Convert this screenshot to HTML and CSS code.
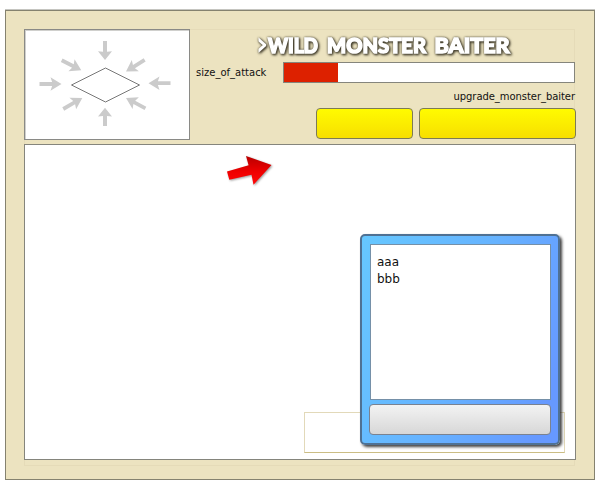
FILE: index.html
```html
<!DOCTYPE html>
<html lang="en">
<head>
<meta charset="utf-8">
<title>Wild Monster Baiter</title>
<link rel="stylesheet" href="styles.css">
</head>
<body>
<main class="frame">
  <div class="stage">
    <header class="top">
      <div class="compass">
        <svg width="163" height="108" viewBox="25 30 163 108">
          <defs><path id="arrow" d="M0 0 L-11 -6.700 L-9.400 -1.900 H-22 V1.900 H-9.400 L-11 6.700 Z"/></defs>
          <g fill="#cbcbcb">
            <use href="#arrow" transform="translate(61.500 84)"/>
            <use href="#arrow" transform="translate(148.500 83.200) rotate(180)"/>
            <path d="M105 60 L98 51.200 L103 51.800 V41 H107 V51.800 L112 51.200 Z"/>
            <path d="M105 107.700 L98 116.500 L103 116 V126 H107 V116 L112 116.500 Z"/>
            <use href="#arrow" transform="translate(81.300 70.200) rotate(27)"/>
            <use href="#arrow" transform="translate(126 71.500) rotate(148)"/>
            <use href="#arrow" transform="translate(82.300 98) rotate(-30)"/>
            <use href="#arrow" transform="translate(126 98) rotate(208)"/>
          </g>
          <path d="M71.500 85 L105.500 68 L139.500 85 L105.500 102 Z" fill="#fff" stroke="#777" stroke-width="1"/>
        </svg>
      </div>
      <div class="controls">
        <svg class="title" width="270" height="30" viewBox="250 31 270 30">
          <text><tspan x="256.500" y="56" class="mark" textLength="11" lengthAdjust="spacingAndGlyphs">&gt;</tspan><tspan x="268" y="53" textLength="50" lengthAdjust="spacingAndGlyphs">WILD</tspan><tspan x="327" textLength="99" lengthAdjust="spacingAndGlyphs">MONSTER</tspan><tspan x="434.500" textLength="75" lengthAdjust="spacingAndGlyphs">BAITER</tspan></text>
        </svg>
        <div class="attack">
          <span class="label size">size_of_attack</span>
          <div class="meter"><div class="fill"></div></div>
        </div>
        <div class="label upgrade">upgrade_monster_baiter</div>
        <div class="buttons">
          <button class="yellow small"></button>
          <button class="yellow large"></button>
        </div>
      </div>
    </header>
    <section class="field">
      <svg class="pointer" width="60" height="45" viewBox="220 150 60 45">
        <defs><linearGradient id="red" x1="0" y1="0" x2="0" y2="1"><stop offset="0" stop-color="#b80000"/><stop offset=".55" stop-color="#ef0000"/><stop offset="1" stop-color="#ff0909"/></linearGradient></defs>
        <path d="M271.500 165 L246 156 L248.600 165.300 L227 171.500 L229.300 179.700 L251.500 174.800 L253.500 184.700 Z" fill="url(#red)"/>
      </svg>
      <div class="hint"></div>
      <div class="dialog">
        <div class="message">aaa<br>bbb</div>
        <button class="confirm"></button>
      </div>
    </section>
  </div>
</main>
</body>
</html>
```

FILE: styles.css
```css
* { box-sizing: border-box; }
body {
  margin: 0;
  height: 480px;
  padding: 10px 0 0 5px;
  overflow: hidden;
  background: #fff;
  color: #111;
  font-family: "DejaVu Sans", sans-serif;
}
.frame {
  width: 590px;
  height: 470px;
  padding: 18px;
  border: 1px solid #85826f;
  box-shadow: 0 -1px 0 #c5c5c0;
  background: #ece3c0;
}
.stage {
  width: 551px;
  height: 437px;
  border: 1px solid #e5dbb8;
}
.top {
  display: flex;
  height: 114px;
}
.compass {
  flex: none;
  width: 166px;
  height: 111px;
  margin: -1px 0 0 -1px;
  border: 1px solid #8a8a86;
  box-shadow: inset 1px 1px 0 #d0d0cd;
  background: #fff;
}
.compass svg { display: block; }
.controls {
  flex: 1;
  display: flex;
  flex-direction: column;
  margin-right: -2px;
}
.title {
  flex: none;
  margin: 1px 0 0 60px;
  overflow: visible;
  filter: drop-shadow(1px 1px 1px rgba(50, 45, 30, .9)) drop-shadow(0 0 1px rgba(50, 45, 30, .7));
}
.title text {
  font: 900 20.5px Lato, sans-serif;
  fill: #fff;
  stroke: #fff;
  stroke-width: 1.5px;
  stroke-linejoin: miter;
}
.title .mark {
  font-size: 33px;
  stroke-width: 0;
}
.attack {
  display: flex;
  justify-content: space-between;
  align-items: center;
  height: 22px;
  padding: 0 1px 0 6px;
}
.label {
  font-size: 10px;
  line-height: 14px;
}
.size { margin-top: 2px; }
.meter {
  width: 292px;
  height: 21px;
  border: 1px solid #85857c;
  background: #fff;
}
.fill {
  width: 54px;
  height: 19px;
  background: #dd2100;
}
.upgrade {
  margin-top: 7px;
  padding-right: 1px;
  text-align: right;
  letter-spacing: -.06px;
}
.buttons {
  display: flex;
  justify-content: flex-end;
  gap: 6px;
  margin-top: 4px;
}
button {
  padding: 0;
  border: 1px solid #7d7b55;
  border-radius: 4px;
}
.yellow {
  height: 31px;
  background: linear-gradient(#fffb00, #f7df00);
}
.small { width: 97px; }
.large { width: 157px; }
.field {
  position: relative;
  width: 552px;
  height: 316px;
  margin-left: -1px;
  border: 1px solid #85857c;
  background: #fff;
}
.pointer {
  position: absolute;
  left: 195px;
  top: 5px;
  filter: drop-shadow(1px 1px 1px rgba(0, 0, 0, .4));
}
.hint {
  position: absolute;
  left: 279px;
  top: 267px;
  width: 261px;
  height: 41px;
  border: 1px solid #e2d9b9;
  border-bottom-color: #cbbd84;
}
.dialog {
  position: absolute;
  left: 335px;
  top: 89px;
  display: flex;
  flex-direction: column;
  width: 200px;
  height: 211px;
  padding: 8px 7px 8px;
  border: 2px solid #4f7193;
  border-radius: 5px;
  background: linear-gradient(110deg, #66c8ff, #66b3ff 50%, #6699ff 90%) border-box;
  box-shadow: 2px 2px 3px rgba(0, 0, 0, .75);
}
.message {
  flex: 1;
  margin: 0 0 4px 1px;
  padding: 9px 6px;
  border: 1px solid #7590a8;
  background: #fff;
  font-size: 12px;
  line-height: 17px;
}
.confirm {
  height: 31px;
  border-color: #7a8290;
  background: linear-gradient(#f3f3f3, #d7d7d7);
}
```
